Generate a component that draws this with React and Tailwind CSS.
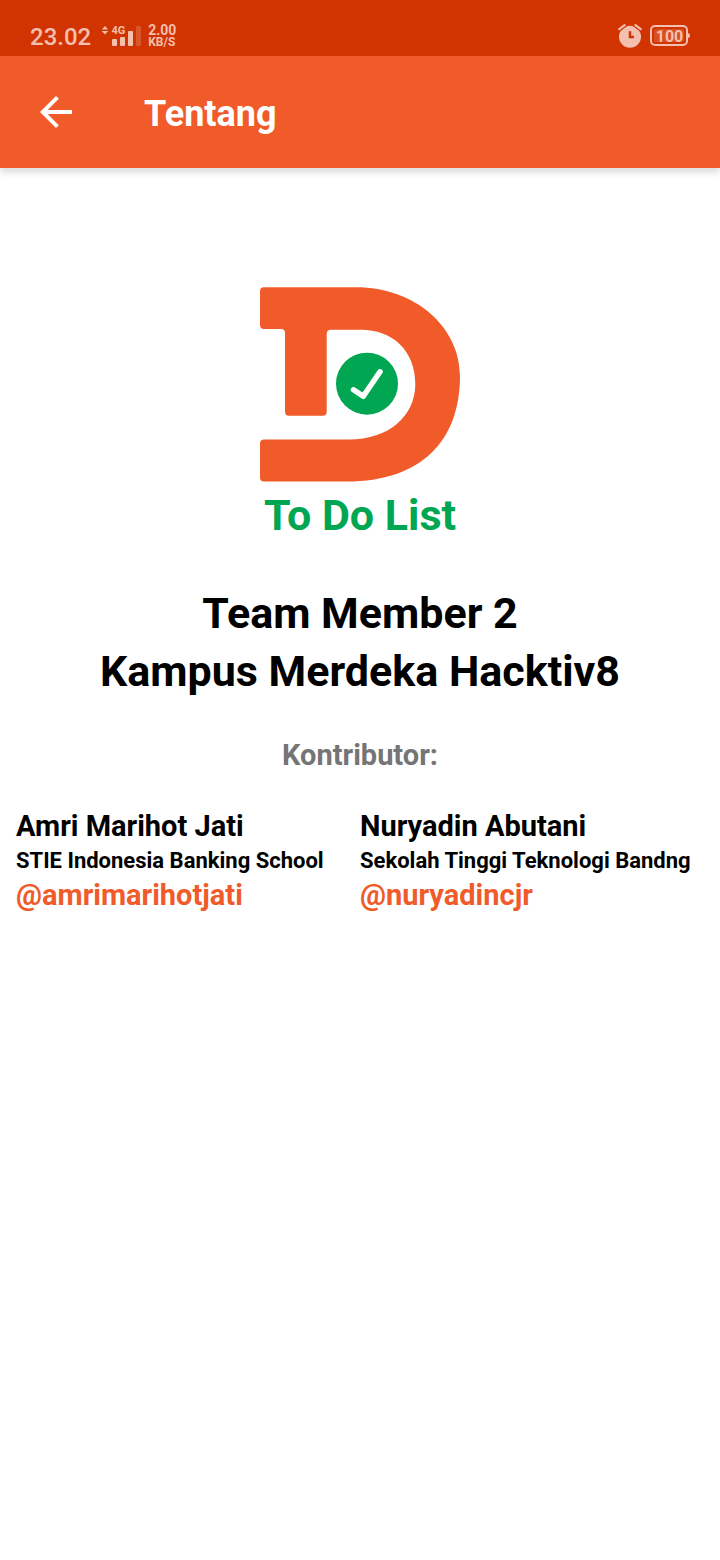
function StatusBar() {
  return (
    <div className="flex h-14 items-center justify-between bg-[#d13400] px-[30px] pt-4 text-[#f3bfae]">
      <div className="flex items-center">
        <span className="pt-0.5 text-2xl font-medium">23.02</span>
        <svg className="ml-2.5 h-6 w-10" viewBox="101 24 40 24" fill="currentColor" aria-label="4G">
          <path d="M105 26l3.2 3.4h-6.4zM105 34.4l3.2-3.4h-6.4z" />
          <rect x="112" y="39" width="5" height="7" rx="1" />
          <rect x="120" y="37" width="5" height="9" rx="1" />
          <rect x="128" y="31" width="5" height="15" rx="1" />
          <rect x="136" y="26" width="5" height="20" rx="1" opacity=".25" />
          <text x="111.5" y="34" fontSize="11" fontWeight="700" fontFamily="Roboto, sans-serif">4G</text>
        </svg>
        <span className="ml-[7px] flex flex-col font-bold">
          <span className="text-sm leading-3">2.00</span>
          <span className="text-xs leading-3">KB/S</span>
        </span>
      </div>
      <div className="flex items-center gap-2">
        <svg className="size-6" viewBox="0 0 24 24" fill="none" stroke="currentColor" strokeWidth="2" strokeLinecap="round" aria-label="Alarm">
          <circle cx="12" cy="12.7" r="11" fill="currentColor" stroke="none" />
          <path d="M1.2 5.2L6.6 1.2M22.8 5.2L17.4 1.2" stroke="#d13400" strokeWidth="4.5" />
          <path d="M1.2 5.2L6.6 1.2M22.8 5.2L17.4 1.2" strokeWidth="2.2" />
          <path d="M12 7.3v5.7h4" stroke="#d13400" strokeWidth="2.5" strokeLinecap="butt" />
        </svg>
        <svg className="h-[22px] w-10" viewBox="0 0 40 22" aria-label="Battery">
          <rect x="1" y="1" width="36" height="19" rx="4" fill="none" stroke="currentColor" strokeWidth="2" />
          <rect x="4" y="4" width="30" height="13" rx="2" fill="currentColor" opacity=".2" />
          <path d="M38 8q2 0 2 2.5t-2 2.5z" fill="currentColor" />
          <text x="19.5" y="17" textAnchor="middle" fontSize="16" fontWeight="700" fontFamily="Roboto, sans-serif" fill="currentColor">100</text>
        </svg>
      </div>
    </div>
  );
}

function Logo() {
  return (
    <svg className="h-[196px] w-[200px]" viewBox="260 287 200 196" aria-label="To Do List logo">
      <path fill="#f15b2a" d="M264 287.3H356C415 287.3 460 327 460 376C460 441 421 481.5 347 481.5H264Q260 481.5 260 477.5V443.5Q260 439.5 264 439.5H349C389 439.5 415.3 416 415.3 384C415.3 350 392 329.7 361 329.7H331Q326.7 329.7 326.7 334V411.7Q326.7 415.7 322.7 415.7H289Q285 415.7 285 411.7V333Q285 329 281 329H264Q260 329 260 325V291.3Q260 287.3 264 287.3Z" />
      <circle cx="367" cy="383.7" r="31" fill="#00a651" />
      <path d="M353.5 389.8L363.3 396.3L380 371.8" fill="none" stroke="#fff" strokeWidth="5.5" strokeLinecap="round" strokeLinejoin="round" />
    </svg>
  );
}

const contributors = [
  { name: "Amri Marihot Jati", school: "STIE Indonesia Banking School", handle: "@amrimarihotjati" },
  { name: "Nuryadin Abutani", school: "Sekolah Tinggi Teknologi Bandng", handle: "@nuryadincjr" },
];

export default function App() {
  return (
    <div className="min-h-screen bg-white font-['Roboto',sans-serif] text-black">
      <StatusBar />
      <header className="flex h-28 items-center bg-[#f15b2a] px-8 text-white shadow-[0_5px_6px_rgba(0,0,0,0.12)]">
        <button type="button" aria-label="Kembali" className="size-12">
          <svg className="size-12" viewBox="0 0 24 24" fill="currentColor">
            <path d="M20 11H7.83l5.59-5.59L12 4l-8 8 8 8 1.41-1.41L7.83 13H20v-2z" />
          </svg>
        </button>
        <h1 className="ml-16 pt-1 text-4xl font-bold">Tentang</h1>
      </header>
      <main className="flex flex-col items-center px-4 pt-[119px]">
        <Logo />
        <p className="mt-[3px] text-[43px] leading-[58px] font-bold text-[#00a651]">To Do List</p>
        <h2 className="mt-10 text-center text-[43px] leading-[58px] font-bold">
          Team Member 2<br />Kampus Merdeka Hacktiv8
        </h2>
        <h3 className="mt-9 text-[29px] leading-[38px] font-bold text-[#757575]">Kontributor:</h3>
        <ul className="mt-8 grid w-full grid-cols-2">
          {contributors.map((c) => (
            <li key={c.handle} className="font-bold whitespace-nowrap">
              <p className="text-[29px] leading-10">{c.name}</p>
              <p className="text-[22px] leading-[30px]">{c.school}</p>
              <a href={"https://github.com/" + c.handle.slice(1)} className="block text-[29px] leading-[38px] text-[#f15b2a]">{c.handle}</a>
            </li>
          ))}
        </ul>
      </main>
    </div>
  );
}
